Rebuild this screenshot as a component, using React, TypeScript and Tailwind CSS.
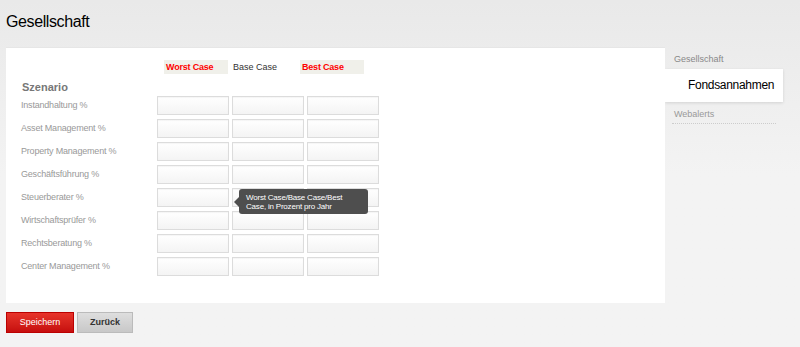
import React from "react";

const rows = [
  "Instandhaltung %",
  "Asset Management %",
  "Property Management %",
  "Geschäftsführung %",
  "Steuerberater %",
  "Wirtschaftsprüfer %",
  "Rechtsberatung %",
  "Center Management %",
];

function Input() {
  return (
    <div className="w-[72px] h-[19px] border border-[#dcdcdc] bg-gradient-to-b from-[#ffffff] to-[#f4f4f4] shadow-[inset_0_1px_1px_rgba(0,0,0,0.04)]" />
  );
}

export default function App() {
  return (
    <div
      className="w-[800px] h-[347px] bg-gradient-to-b from-[#e9e9e9] via-[#f3f3f3] to-[#f3f3f3] relative overflow-hidden"
      style={{ fontFamily: '"Liberation Sans", Arial, sans-serif' }}
    >
      <div className="pl-[6px] pt-[12px] h-[47px]">
        <h1 className="text-[16px] leading-[20px] tracking-[-0.4px] text-black">Gesellschaft</h1>
      </div>
      <div className="flex">
        <div className="ml-[6px] w-[659px] h-[256px] bg-white border-t border-[#e6e6e6] relative">
          <div className="flex pl-[158px] pt-[12px] h-[33px]">
            <div className="w-[64px] h-[14px] bg-[#f0f0ea] text-[#ff0000] text-[9px] font-bold tracking-[-0.2px] leading-[14px] pl-[2px]">Worst Case</div>
            <div className="w-[72px] h-[14px] text-[#333] text-[9px] leading-[14px] pl-[5px]">Base Case</div>
            <div className="w-[64px] h-[14px] bg-[#f0f0ea] text-[#ff0000] text-[9px] font-bold tracking-[-0.2px] leading-[14px] pl-[2px]">Best Case</div>
          </div>
          <div className="pl-[16px] text-[11px] leading-[13px] font-bold text-[#777] h-[14px]">Szenario</div>
          <div className="flex flex-col gap-[4px] pt-[1px]">
            {rows.map((r) => (
              <div key={r} className="flex items-center h-[19px]">
                <div className="w-[151px] pl-[15px] text-[9px] tracking-[-0.2px] text-[#999]">{r}</div>
                <div className="flex gap-[3px]">
                  <Input />
                  <Input />
                  <Input />
                </div>
              </div>
            ))}
          </div>
          <div className="absolute left-[233px] top-[141px] w-[129px] h-[25px] bg-[#4e4e4e] rounded-[3px] text-white text-[8px] tracking-[-0.2px] leading-[9px] pl-[7px] pt-[4px]">
            <div className="absolute left-[-5px] top-[8px] w-0 h-0 border-y-[5px] border-y-transparent border-r-[5px] border-r-[#4e4e4e]" />
            Worst Case/Base Case/Best
            <br />
            Case, in Prozent pro Jahr
          </div>
        </div>
        <div className="w-[135px] pt-[6px]">
          <div className="pl-[9px] text-[9px] text-[#888] h-[16px]">Gesellschaft</div>
          <div className="w-[118px] h-[33px] bg-white shadow-[0_1px_3px_rgba(0,0,0,0.12)] text-[12px] tracking-[-0.3px] text-black leading-[33px] pl-[23px]">Fondsannahmen</div>
          <div className="mx-[7px] mt-[6px] pl-[2px] text-[9px] text-[#999] h-[16px] border-b border-dotted border-[#ccc] w-[104px]">Webalerts</div>
        </div>
      </div>
      <div className="flex gap-[3px] pl-[6px] pt-[9px]">
        <div className="w-[68px] h-[21px] bg-gradient-to-b from-[#e7332a] to-[#c60d0d] border border-[#b00] text-white text-[9px] leading-[19px] text-center">Speichern</div>
        <div className="w-[56px] h-[21px] bg-gradient-to-b from-[#dedede] to-[#c8c8c8] border border-[#bbb] text-[#333] text-[9px] font-bold leading-[19px] text-center">Zurück</div>
      </div>
    </div>
  );
}
